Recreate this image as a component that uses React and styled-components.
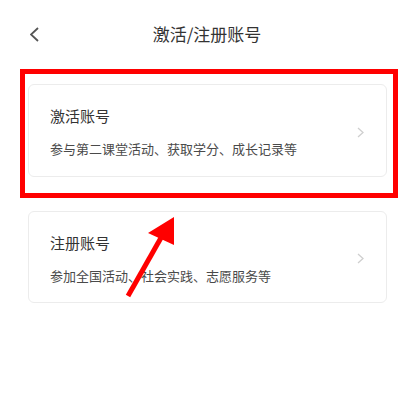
import React from 'react'
import styled, { createGlobalStyle } from 'styled-components'

const Global = createGlobalStyle`
    body {
        margin: 0;
        background: #fff;
        font-family: "Noto Sans CJK SC", "Noto Sans", sans-serif;
    }
`

const Page = styled.div`
    position: relative;
    width: 414px;
    height: 412px;
    overflow: hidden;
`

const Header = styled.div`
    height: 66px;
    display: flex;
    align-items: center;
    justify-content: center;
    position: relative;
`

const BackButton = styled.button`
    position: absolute;
    left: 26px;
    top: 24px;
    width: 16px;
    height: 20px;
    padding: 0;
    border: none;
    background: none;
    display: flex;
    align-items: center;
    justify-content: center;
`

const Title = styled.h1`
    margin: 0;
    font-size: 17px;
    font-weight: 400;
    color: #333;
`

const List = styled.div`
    display: flex;
    flex-direction: column;
    gap: 34px;
    padding: 18px 27px 0 28px;
`

const Card = styled.div`
    display: flex;
    align-items: center;
    justify-content: space-between;
    border: 1px solid #ececec;
    border-radius: 6px;
    padding: 20px 22px 17px 21px;
    height: ${p => p.$height}px;
    box-sizing: border-box;
`

const CardText = styled.div`
    display: flex;
    flex-direction: column;
    gap: 12px;
`

const CardTitle = styled.div`
    font-size: 15px;
    line-height: 22px;
    color: #333;
`

const CardDesc = styled.div`
    font-size: 13px;
    line-height: 20px;
    color: #4a4a4a;
`

const Arrow = styled.div`
    display: flex;
`

const Highlight = styled.div`
    position: absolute;
    left: 20px;
    top: 69px;
    width: 378px;
    height: 129px;
    border: 5px solid #ff0000;
    box-sizing: border-box;
    pointer-events: none;
`

const Pointer = styled.svg`
    position: absolute;
    left: 0;
    top: 0;
    pointer-events: none;
`

const Chevron = ({ color, w, h, sw, right }) => (
    <svg width={w} height={h} viewBox={`0 0 ${w} ${h}`}>
        <path
            d={right
                ? `M1 1 L${w - 1} ${h / 2} L1 ${h - 1}`
                : `M${w - 1} 1 L1 ${h / 2} L${w - 1} ${h - 1}`}
            fill="none"
            stroke={color}
            strokeWidth={sw}
        />
    </svg>
)

const items = [
    { title: '激活账号', desc: '参与第二课堂活动、获取学分、成长记录等', height: 93 },
    { title: '注册账号', desc: '参加全国活动、社会实践、志愿服务等', height: 92 },
]

function App() {
    return (
        <Page>
            <Global />
            <Header>
                <BackButton>
                    <Chevron color="#555" w={9} h={15} sw={1.8} />
                </BackButton>
                <Title>激活/注册账号</Title>
            </Header>
            <List>
                {items.map(item => (
                    <Card key={item.title} $height={item.height}>
                        <CardText>
                            <CardTitle>{item.title}</CardTitle>
                            <CardDesc>{item.desc}</CardDesc>
                        </CardText>
                        <Arrow>
                            <Chevron color="#cfcfcf" w={7} h={11} sw={1.3} right />
                        </Arrow>
                    </Card>
                ))}
            </List>
            <Highlight />
            <Pointer width="414" height="412">
                <line x1="128" y1="296" x2="162" y2="236" stroke="#ff0000" strokeWidth="5" />
                <polygon points="174,217 148,233 174,245" fill="#ff0000" />
            </Pointer>
        </Page>
    )
}

export default App
